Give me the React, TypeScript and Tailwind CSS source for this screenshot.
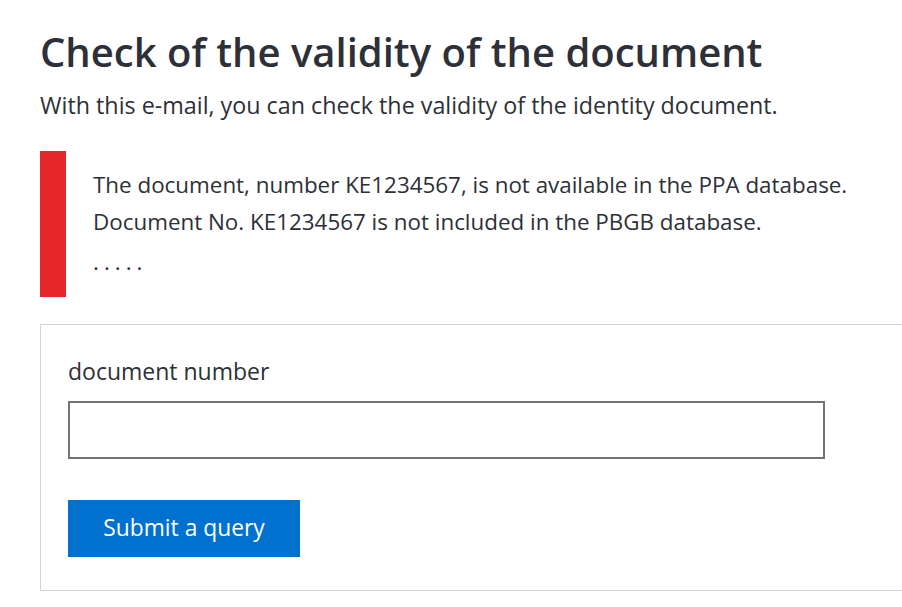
export default function App() {
  return (
    <div className="min-h-screen bg-white text-[#2d3038] overflow-hidden" style={{ fontFamily: '"Open Sans", "Noto Sans", sans-serif' }}>
      <div className="pl-[40px] pt-[26px]">
        <h1 className="text-[40px] leading-[52px] font-semibold whitespace-nowrap">Check of the validity of the document</h1>
        <p className="mt-[12px] text-[23.3px] leading-[30px] whitespace-nowrap">With this e-mail, you can check the validity of the identity document.</p>
        <div className="mt-[31px] flex">
          <div className="w-[26px] h-[146px] bg-[#e72629]" />
          <div className="pl-[27px] pt-[15px] text-[22.4px] leading-[37px] whitespace-nowrap">
            <p>The document, number KE1234567, is not available in the PPA database.</p>
            <p>Document No. KE1234567 is not included in the PBGB database.</p>
            <p className="tracking-[5px] leading-[44px]">.....</p>
          </div>
        </div>
        <div className="mt-[27px] border border-[#d4d4d4] border-r-0 h-[267px] pl-[27px] pt-[31px]">
          <label className="block text-[23px] leading-[30px]">document number</label>
          <input className="mt-[15px] block w-[757px] h-[58px] border-2 border-[#737373] outline-none" />
          <button className="mt-[41px] w-[232px] h-[57px] bg-[#0071cf] text-white text-[22.8px]">Submit a query</button>
        </div>
      </div>
    </div>
  );
}
